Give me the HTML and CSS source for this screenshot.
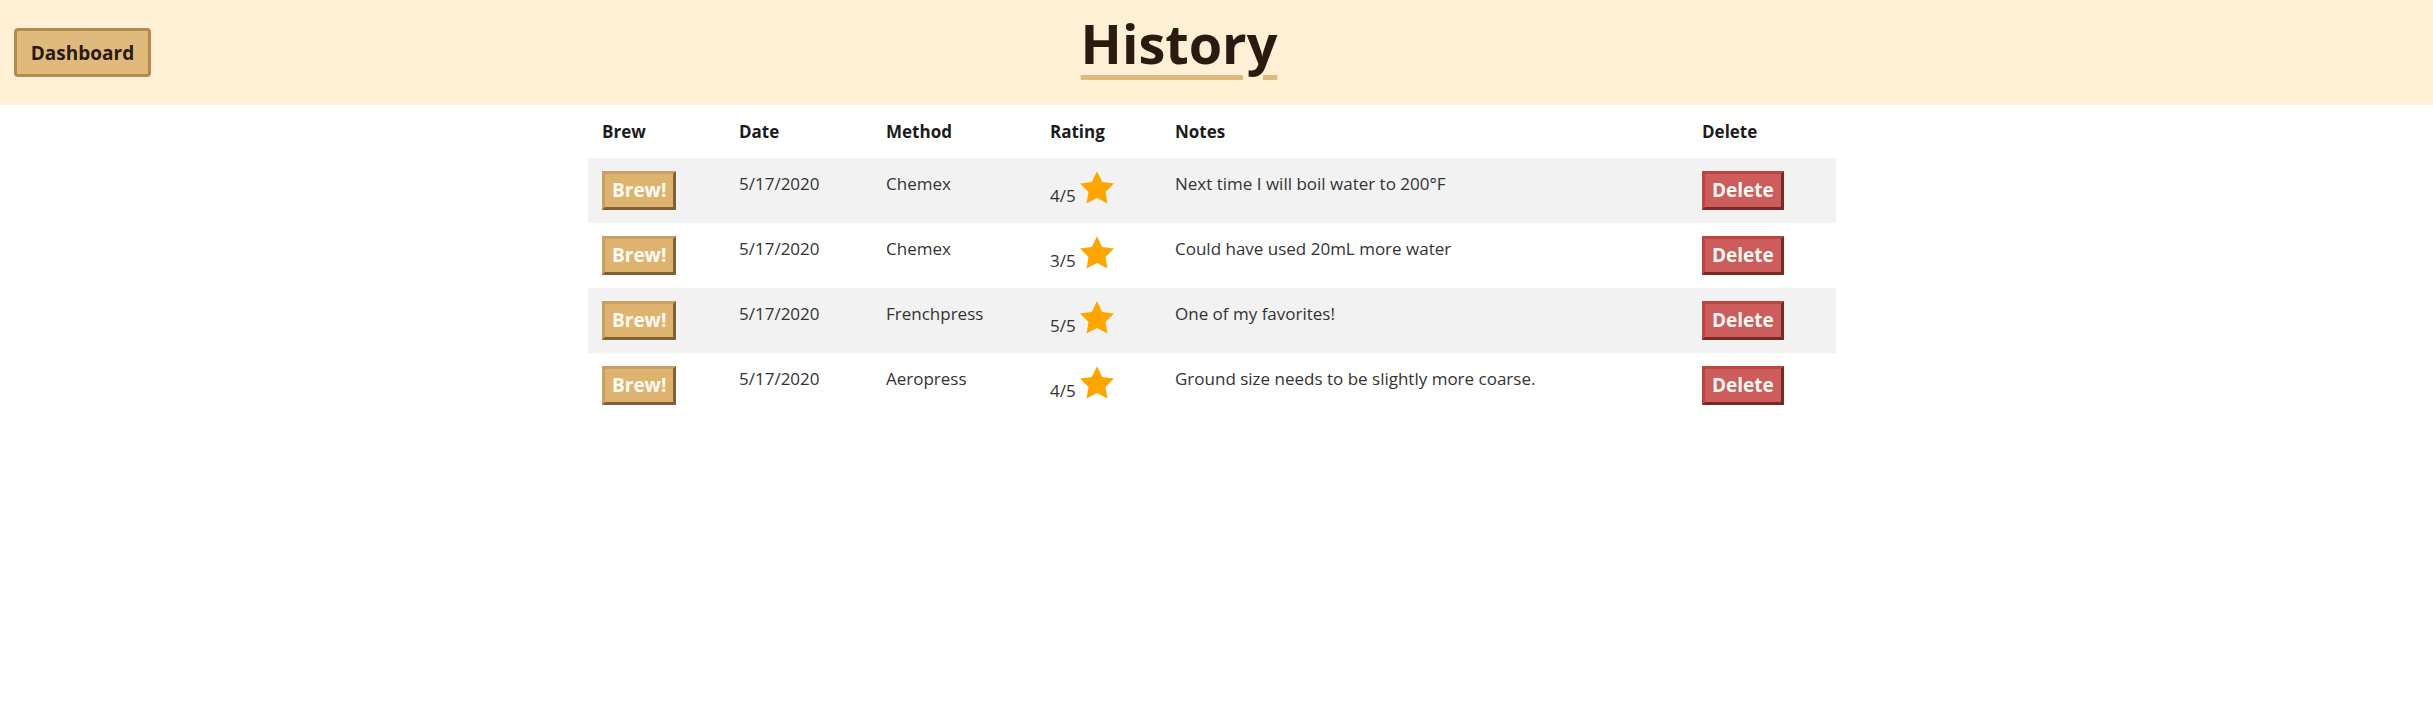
FILE: index.html
```html
<!DOCTYPE html>
<html lang="en">
<head>
<meta charset="utf-8">
<title>History</title>
<link rel="stylesheet" href="styles.css">
</head>
<body>
<header class="topbar">
  <button class="dash-btn">Dashboard</button>
  <h1 class="title">History</h1>
</header>
<main class="content">
  <table class="history">
    <colgroup>
      <col class="c-brew"><col class="c-date"><col class="c-method"><col class="c-rating"><col class="c-notes"><col class="c-delete">
    </colgroup>
    <thead>
      <tr><th>Brew</th><th>Date</th><th>Method</th><th>Rating</th><th>Notes</th><th>Delete</th></tr>
    </thead>
    <tbody>
      <tr>
        <td><button class="brew-btn">Brew!</button></td>
        <td>5/17/2020</td>
        <td>Chemex</td>
        <td class="rating">4/5 <svg class="star" viewBox="2 2 20 19.1"><polygon points="12,2 15.09,8.26 22,9.27 17,14.14 18.18,21.02 12,17.77 5.82,21.02 7,14.14 2,9.27 8.91,8.26"/></svg></td>
        <td>Next time I will boil water to 200°F</td>
        <td><button class="del-btn">Delete</button></td>
      </tr>
      <tr>
        <td><button class="brew-btn">Brew!</button></td>
        <td>5/17/2020</td>
        <td>Chemex</td>
        <td class="rating">3/5 <svg class="star" viewBox="2 2 20 19.1"><polygon points="12,2 15.09,8.26 22,9.27 17,14.14 18.18,21.02 12,17.77 5.82,21.02 7,14.14 2,9.27 8.91,8.26"/></svg></td>
        <td>Could have used 20mL more water</td>
        <td><button class="del-btn">Delete</button></td>
      </tr>
      <tr>
        <td><button class="brew-btn">Brew!</button></td>
        <td>5/17/2020</td>
        <td>Frenchpress</td>
        <td class="rating">5/5 <svg class="star" viewBox="2 2 20 19.1"><polygon points="12,2 15.09,8.26 22,9.27 17,14.14 18.18,21.02 12,17.77 5.82,21.02 7,14.14 2,9.27 8.91,8.26"/></svg></td>
        <td>One of my favorites!</td>
        <td><button class="del-btn">Delete</button></td>
      </tr>
      <tr>
        <td><button class="brew-btn">Brew!</button></td>
        <td>5/17/2020</td>
        <td>Aeropress</td>
        <td class="rating">4/5 <svg class="star" viewBox="2 2 20 19.1"><polygon points="12,2 15.09,8.26 22,9.27 17,14.14 18.18,21.02 12,17.77 5.82,21.02 7,14.14 2,9.27 8.91,8.26"/></svg></td>
        <td>Ground size needs to be slightly more coarse.</td>
        <td><button class="del-btn">Delete</button></td>
      </tr>
    </tbody>
  </table>
</main>
</body>
</html>
```
FILE: styles.css
```css
html, body {
  margin: 0;
  padding: 0;
  background: #ffffff;
  font-family: "Open Sans", "Noto Sans", sans-serif;
}

.topbar {
  display: flex;
  align-items: center;
  height: 105px;
  background: #ffefd5;
  padding-left: 14px;
  box-sizing: border-box;
}

.dash-btn {
  font-family: inherit;
  font-weight: 700;
  font-size: 19px;
  color: #2a1a0f;
  background: #e0b97c;
  border: 3px solid #b38b4d;
  border-radius: 4px;
  width: 137px;
  height: 49px;
  padding: 0;
}

.title {
  flex: 1;
  margin: 0 226px 0 0;
  text-align: center;
  font-size: 54px;
  font-weight: 700;
  line-height: 1.2;
  color: #2a1a0f;
  text-decoration: underline;
  text-decoration-color: #e0b97c;
  text-decoration-thickness: 5px;
  text-underline-offset: 11px;
  padding-bottom: 18px;
}

.content {
  padding-left: 588px;
}

.history {
  width: 1248px;
  table-layout: fixed;
  border-collapse: collapse;
  border-spacing: 0;
  font-size: 17px;
  line-height: 1.5;
  color: #333333;
}

.c-brew { width: 137px; }
.c-date { width: 147px; }
.c-method { width: 164px; }
.c-rating { width: 125px; }
.c-notes { width: 527px; }
.c-delete { width: 148px; }

.history th {
  text-align: left;
  font-weight: 700;
  color: #1c1c1c;
  padding: 14px 14px 13px;
}

.history td {
  vertical-align: top;
  padding: 13px 14px;
}

.history tbody tr:nth-child(odd) {
  background: #f2f2f2;
}

.star {
  width: 34px;
  height: 33px;
  fill: #ffa500;
  vertical-align: -2px;
}

.brew-btn,
.del-btn {
  font-family: inherit;
  font-weight: 700;
  font-size: 19px;
  line-height: 23px;
  padding: 5px 7px;
  border-width: 3px;
  border-style: solid;
  color: #fffaf2;
  margin: 0;
}

.brew-btn {
  background: #deb26f;
  border-color: #c9a063 #7f6038 #7f6038 #c9a063;
}

.del-btn {
  background: #cd5c5c;
  border-color: #b9463f #7a2826 #7a2826 #b9463f;
}
```
